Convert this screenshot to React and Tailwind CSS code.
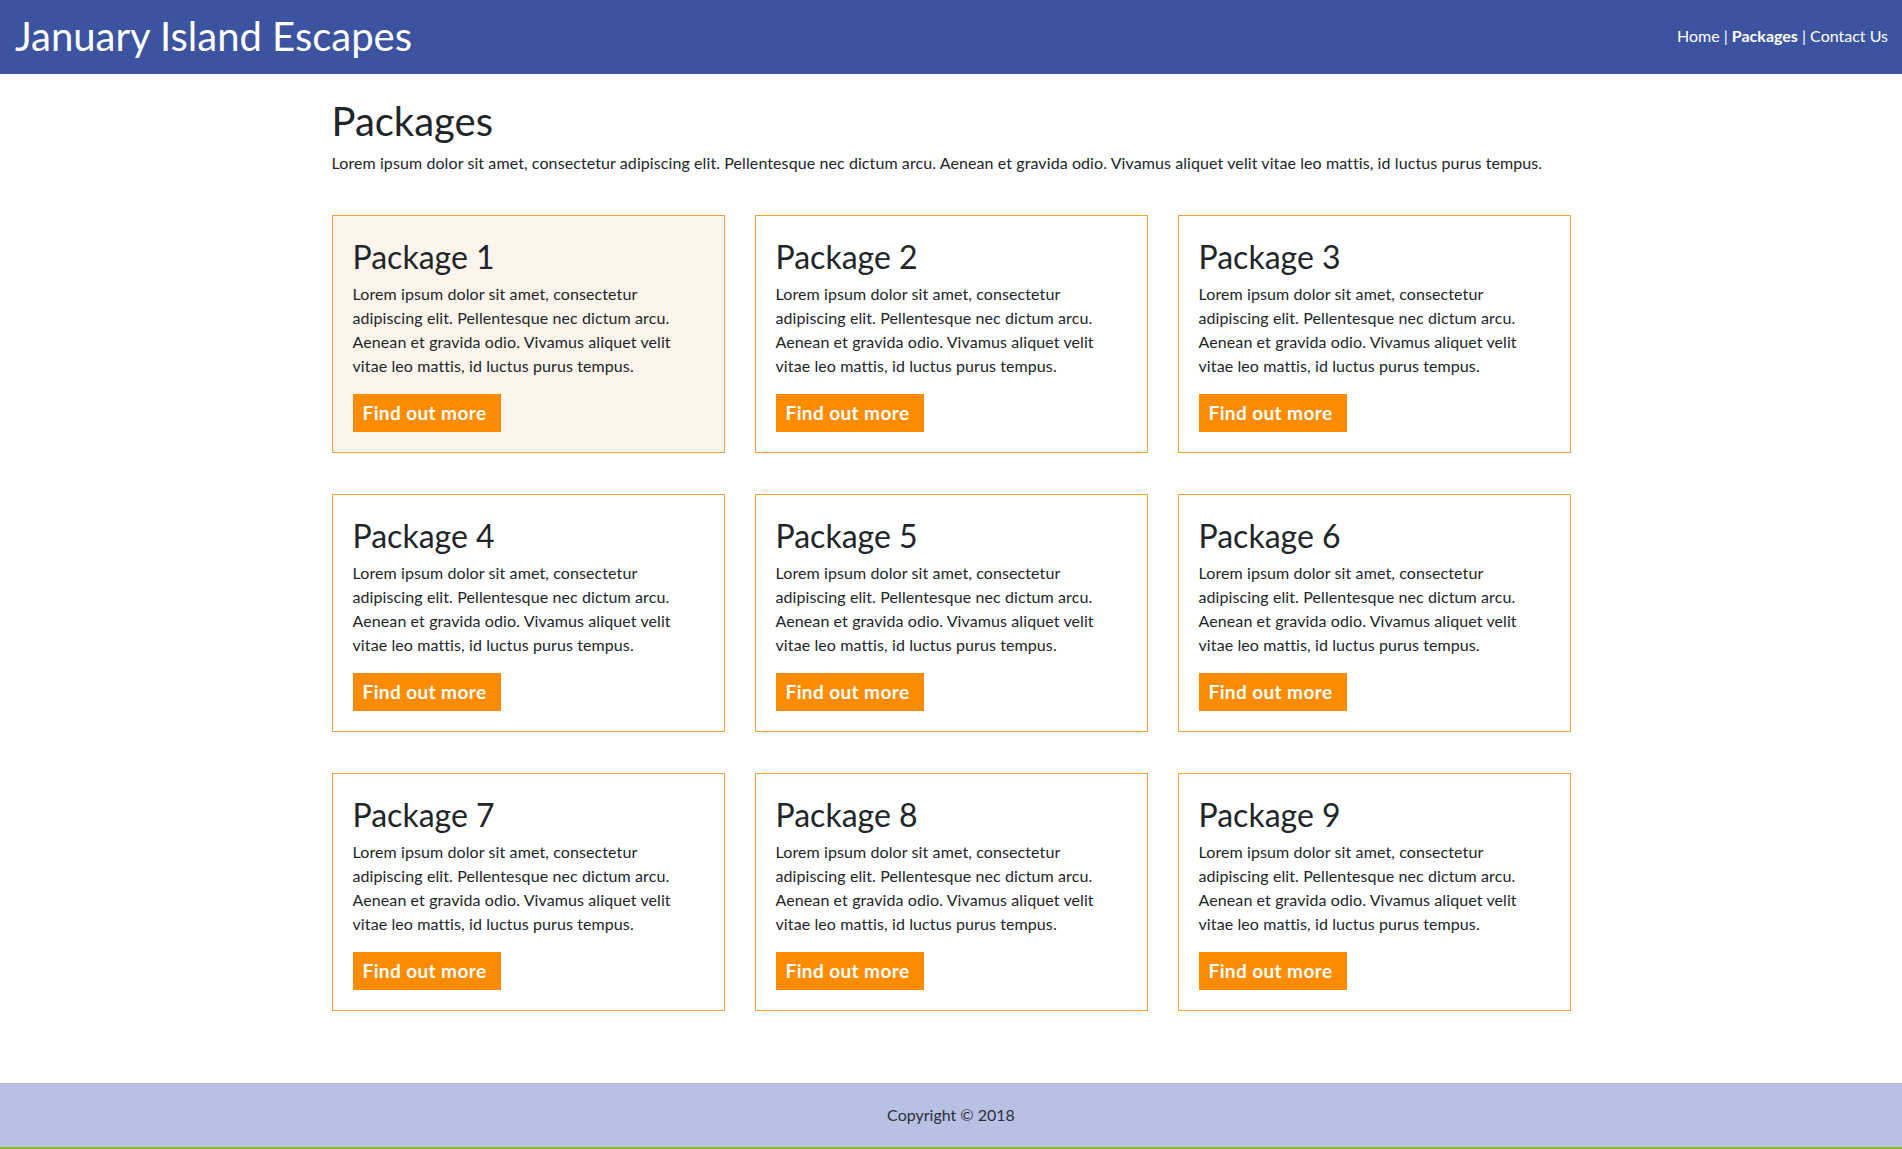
import React from "react";

const lines = [
  "Lorem ipsum dolor sit amet, consectetur",
  "adipiscing elit. Pellentesque nec dictum arcu.",
  "Aenean et gravida odio. Vivamus aliquet velit",
  "vitae leo mattis, id luctus purus tempus.",
];

function Card({ n, active }) {
  return (
    <div
      className={
        "border border-[#f0a43c] px-[20px] pt-[22px] pb-[20px] " +
        (active ? "bg-[#fdf5eb]" : "bg-white")
      }
    >
      <h2 className="text-[32px] leading-[38px] text-[#212529] font-normal">Package {n}</h2>
      <p className="mt-[6px] text-[16px] leading-[24px] tracking-[0.1px] text-[#212529]">
        {lines.map((l, i) => (
          <span key={i} className="block whitespace-nowrap">
            {l}
          </span>
        ))}
      </p>
      <a
        href="#"
        className="mt-[16px] inline-flex h-[38px] w-[148px] items-center bg-[#ff8c00] pl-[10px] text-[19px] tracking-[0.4px] font-bold text-white"
      >
        Find out more
      </a>
    </div>
  );
}

export default function App() {
  return (
    <div
      className="min-h-[1149px] bg-white flex flex-col"
      style={{ fontFamily: "Lato, 'Open Sans', sans-serif" }}
    >
      <header className="h-[74px] bg-[#3c53a0] flex items-center justify-between pl-[15px] pr-[14px]">
        <h1 className="text-[40px] leading-[48px] text-white font-normal -mt-[2px]">
          January Island Escapes
        </h1>
        <nav className="text-[16px] text-white -mt-[2px]">
          <a href="#">Home</a> | <a href="#" className="font-bold">Packages</a> |{" "}
          <a href="#">Contact Us</a>
        </nav>
      </header>

      <main className="w-[1239px] mx-auto flex-1">
        <h1 className="mt-[23px] text-[40px] leading-[48px] text-[#212529] font-normal">
          Packages
        </h1>
        <p className="mt-[6px] text-[16px] leading-[24px] tracking-[0.09px] text-[#212529]">
          Lorem ipsum dolor sit amet, consectetur adipiscing elit. Pellentesque nec dictum arcu.
          Aenean et gravida odio. Vivamus aliquet velit vitae leo mattis, id luctus purus tempus.
        </p>
        <div className="mt-[40px] grid grid-cols-3 gap-x-[30px] gap-y-[41px]">
          {[1, 2, 3, 4, 5, 6, 7, 8, 9].map((n) => (
            <Card key={n} n={n} active={n === 1} />
          ))}
        </div>
      </main>

      <footer className="mt-[71px] h-[66px] bg-[#b8c1e3] border-b-2 border-[#86bd1f] flex items-center justify-center text-[16px] text-[#2b2f3a]">
        Copyright © 2018
      </footer>
    </div>
  );
}
